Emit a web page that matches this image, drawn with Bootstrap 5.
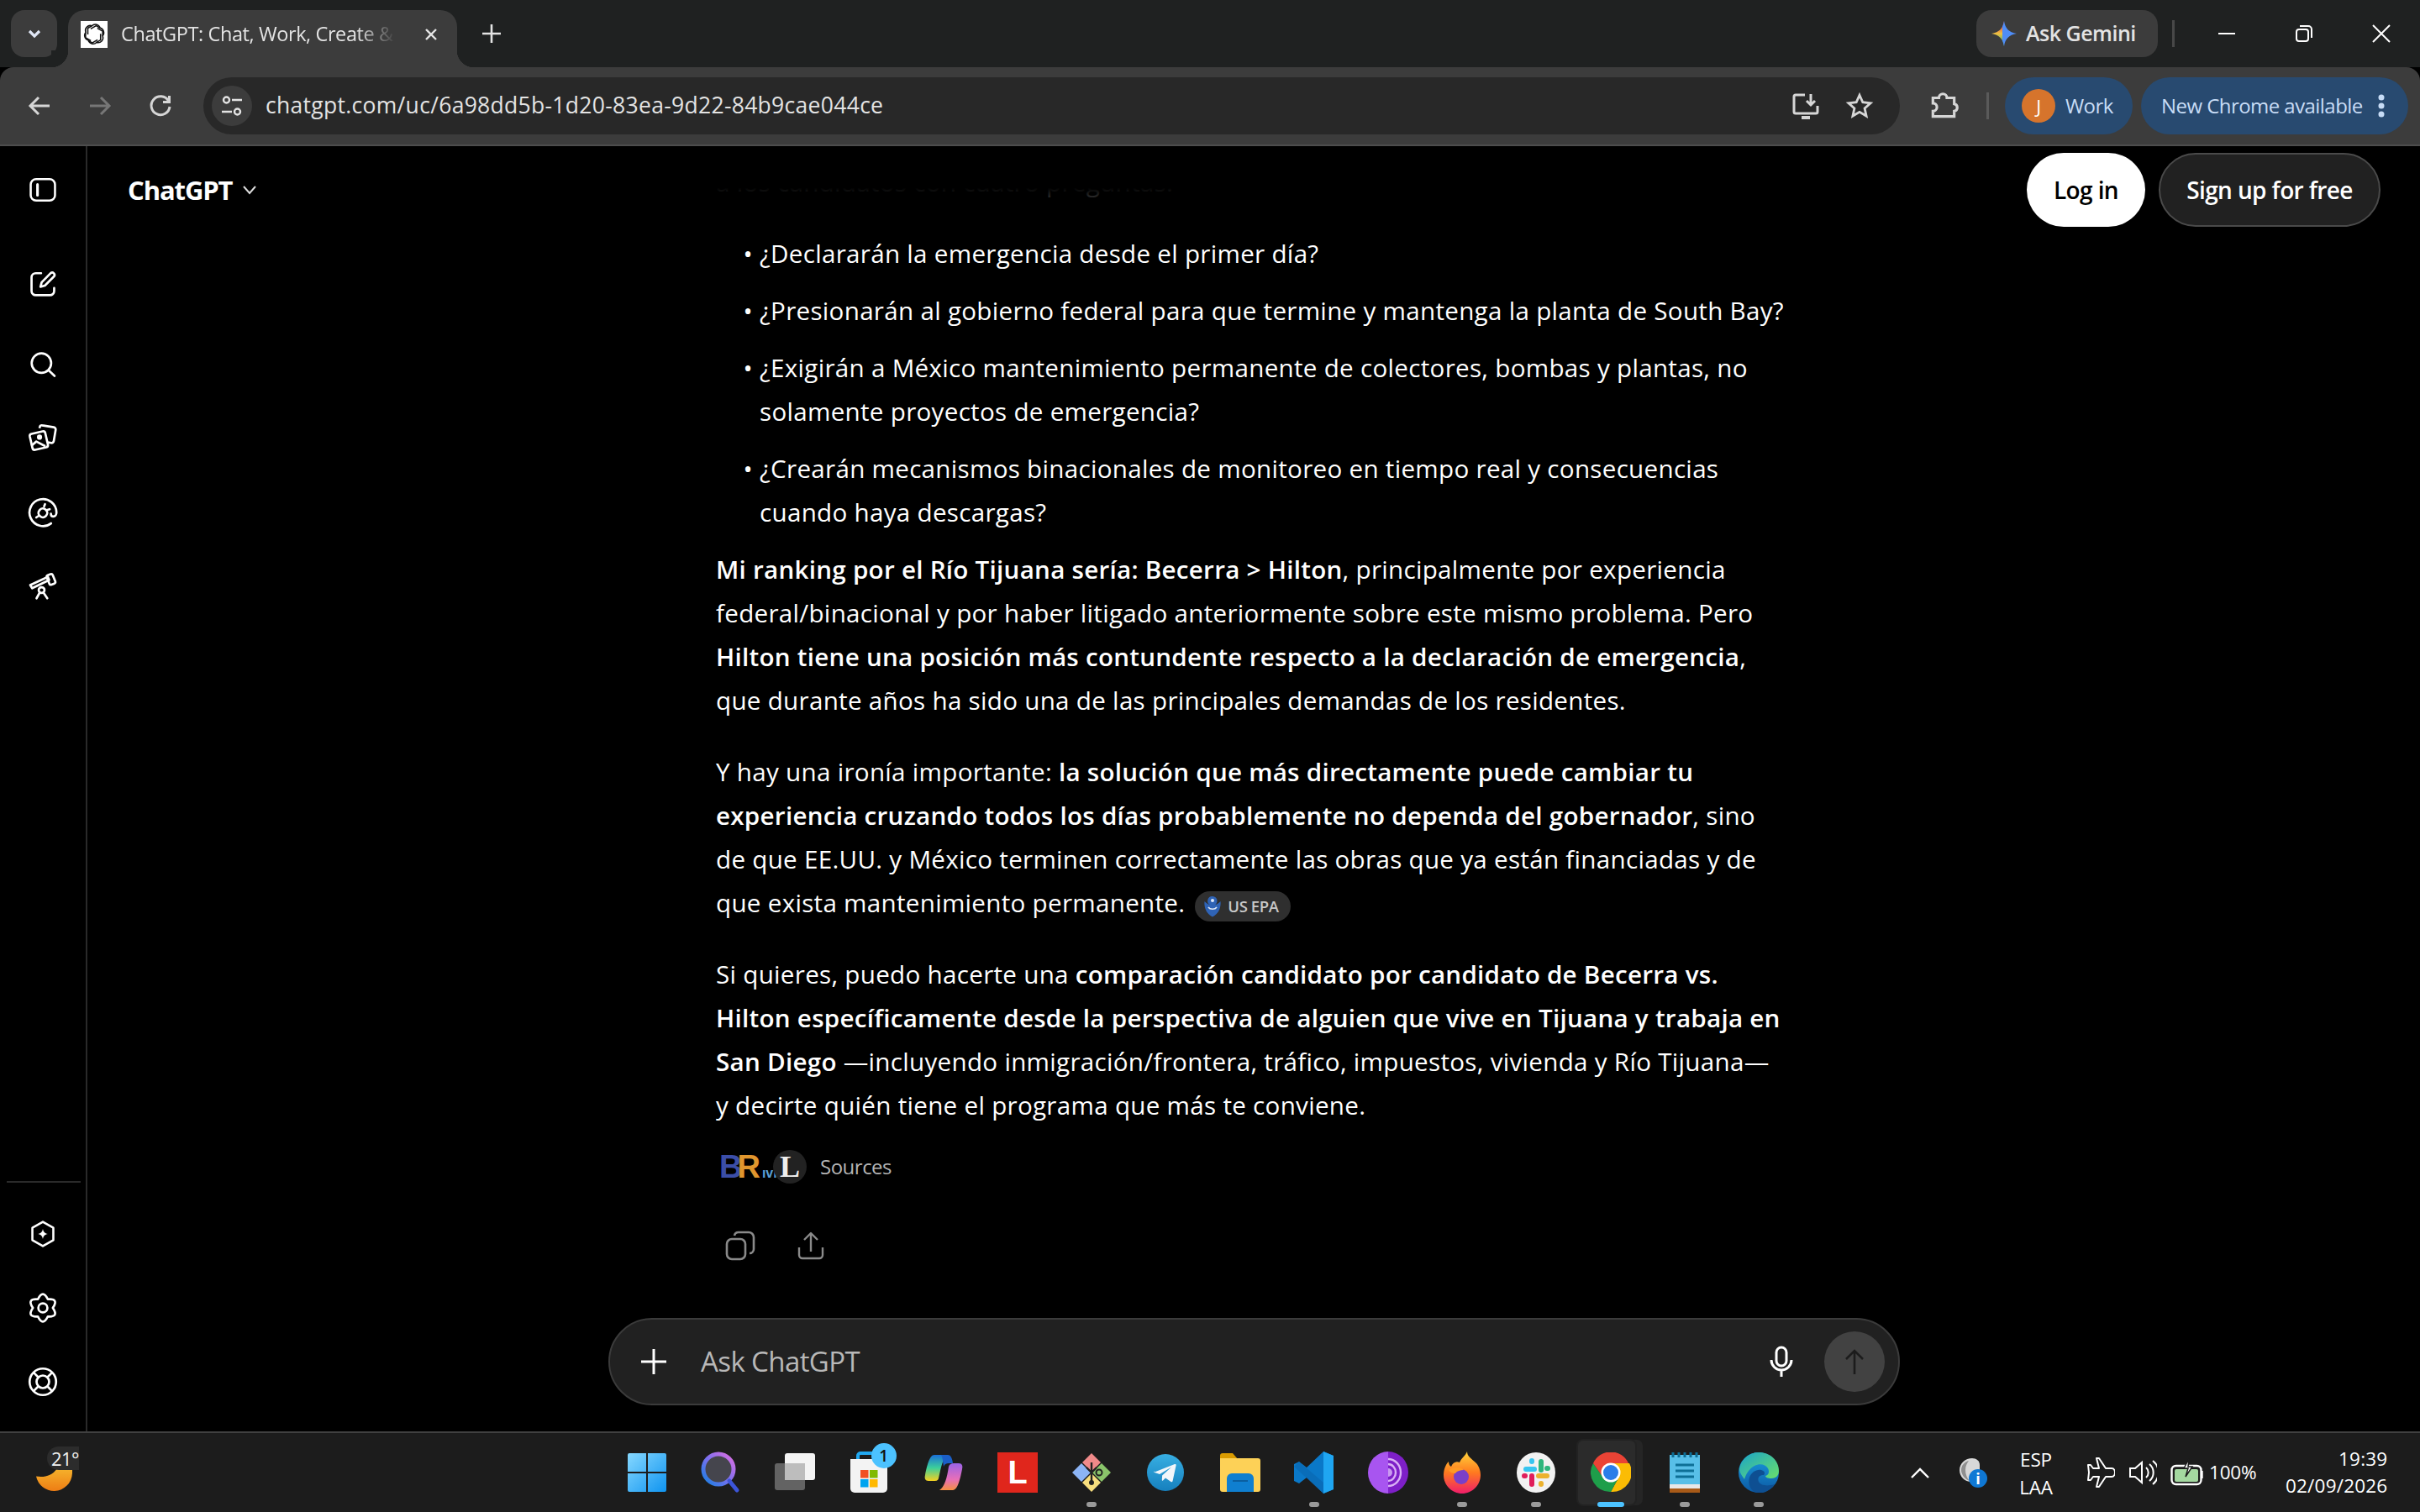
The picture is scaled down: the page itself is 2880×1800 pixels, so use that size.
<!DOCTYPE html>
<html lang="en">
<head>
<meta charset="UTF-8" />
<title>ChatGPT</title>
<link href="https://cdn.jsdelivr.net/npm/bootstrap@5.3.3/dist/css/bootstrap.min.css" rel="stylesheet" />
<style>
  html, body { height: 100%; }
  body { width: 2880px; height: 1800px; overflow: hidden; background: #000; color: #fff; font-family: "Open Sans", "Liberation Sans", sans-serif; }
  svg { display: block; flex: none; }

  /* browser chrome */
  .tabstrip { height: 80px; background: #1f2121; padding-left: 13px; }
  .tabs-btn { width: 55px; height: 56px; margin-top: 12px; border-radius: 16px; background: #3c3c3c; }
  .tab-active { position: relative; width: 463px; height: 68px; margin-top: 12px; margin-left: 13px; padding: 0 22px 11px 15px; background: #3c3c3c; border-radius: 20px 20px 0 0; color: #e3e3e3; font-size: 23.5px; letter-spacing: -.4px; }
  .tab-active::before, .tab-active::after { content: ""; position: absolute; bottom: 0; width: 20px; height: 20px; }
  .tab-active::before { left: -20px; background: radial-gradient(circle at 0 0, #1f2121 20px, #3c3c3c 20.5px); }
  .tab-active::after { right: -20px; background: radial-gradient(circle at 100% 0, #1f2121 20px, #3c3c3c 20.5px); }
  .tab-favicon { width: 32px; height: 32px; background: #fff; }
  .tab-title { width: 330px; margin-left: 16px; white-space: nowrap; overflow: hidden; -webkit-mask-image: linear-gradient(90deg, #000 85%, transparent 99%); mask-image: linear-gradient(90deg, #000 85%, transparent 99%); }
  .new-tab { margin-left: 13px; margin-top: 12px; }
  .gemini-pill { width: 216px; height: 56px; margin-top: 12px; padding-left: 18px; border-radius: 18px; background: #3c3c3c; color: #e3e3e3; font-size: 25px; font-weight: 600; letter-spacing: -.5px; gap: 11px; }
  .strip-sep { width: 3px; height: 32px; margin: 24px 0 0 17px; background: #484848; }
  .win-btn { width: 92px; height: 56px; margin-top: 12px; }
  .toolbar { height: 94px; background: #3c3c3c; border-radius: 16px 16px 0 0; border-bottom: 2px solid #4d4d4d; padding: 12px 13px 0 11px; }
  .nav-ic { width: 72px; height: 68px; }
  .urlbar { width: 2019px; height: 68px; margin-left: 15px; padding: 0 31px 0 10px; background: #282828; border-radius: 34px; color: #e3e3e3; font-size: 26.5px; letter-spacing: .3px; }
  .site-ic { width: 48px; height: 48px; margin-right: 16px; border-radius: 50%; background: #3c3c3c; }
  .star-ic { margin-left: 30px; }
  .ext-ic { margin-left: 16px; }
  .tool-sep { width: 3px; height: 32px; margin: 18px 0 0 15px; background: #5a5a5a; }
  .chip-blue { height: 68px; border-radius: 34px; background: #284a70; color: #c7dcf6; font-size: 24px; letter-spacing: -.55px; }
  .chip-work { width: 152px; margin-left: 19px; padding-left: 20px; gap: 12px; }
  .avatar-dot { width: 40px; height: 40px; border-radius: 50%; background: #d6742c; color: #fff; font-size: 22px; }
  .chip-update { width: 318px; margin-left: 10px; padding-left: 24px; gap: 17px; }

  /* page */
  .page-wrap { height: 1530px; }
  .side-rail { width: 104px; flex: none; border-right: 2px solid #2a2a2a; padding-bottom: 15px; padding-top: 8px; }
  .rail-ic { width: 100%; height: 88px; }
  .rail-hr { width: 88px; height: 2px; margin: 0 0 17px 8px; background: #2a2a2a; }
  .chat-main { position: relative; min-width: 0; }
  .chat-head { position: absolute; top: 0; left: 0; right: 0; height: 62px; background: linear-gradient(#000 80%, rgba(0, 0, 0, .82) 100%); z-index: 2; }
  .brand-btn { position: absolute; left: 48px; top: 29px; font-size: 31px; font-weight: 700; letter-spacing: -1.1px; gap: 12px; z-index: 3; }
  .head-actions { position: absolute; right: 47px; top: 8px; gap: 16px; z-index: 3; }
  .btn-login, .btn-signup { height: 88px; border-radius: 44px; font-size: 28px; font-weight: 600; letter-spacing: -.6px; }
  .btn-login { width: 141px; background: #fff; color: #000; }
  .btn-signup { width: 264px; background: #212121; border: 2px solid #4a4a4a; color: #fff; }
  .chat-scroll { padding: 17px 0 0 748px; overflow: hidden; }
  .msg-body { width: 1340px; font-size: 29.6px; line-height: 52px; letter-spacing: .29px; }
  .msg-body p { margin: 0 0 33px; }
  .msg-body ul { margin: 0 0 16px; padding-left: 52px; }
  .msg-body li { margin-bottom: 16px; }
  .msg-body li::marker { content: "• "; }
  .msg-body b { font-weight: 600; letter-spacing: .26px; }
  .cite-chip { height: 36px; width: 114px; margin-left: 12px; padding-left: 10px; gap: 7px; vertical-align: -6px; border-radius: 18px; background: #2f2f2f; color: #c8c8c8; font-size: 18.5px; font-weight: 600; line-height: 1; letter-spacing: -.4px; }
  .sources-row { height: 48px; margin-top: 23px; color: #b4b4b4; font-size: 24px; letter-spacing: -.5px; }
  .src-logo { width: 64px; margin-left: 4px; font-family: "Liberation Sans", sans-serif; font-weight: 700; font-size: 38px; letter-spacing: -6px; line-height: 1; white-space: nowrap; }
  .src-b { color: #3b4ea8; }
  .src-r { color: #e0962e; }
  .src-rest { font-size: 16px; letter-spacing: 0; color: #5aa0d8; margin-left: 8px; }
  .src-l { width: 40px; height: 40px; margin: 0 16px 0 0; border-radius: 50%; background: #222; font-family: "Liberation Serif", serif; font-size: 36px; font-weight: 700; color: #eee; letter-spacing: 0; line-height: 1; }
  .act-row { margin: 52px 0 0 11px; gap: 50px; }
  .composer-wrap { padding: 0 0 31px 620px; }
  .composer-bar { width: 1537px; height: 104px; background: #212121; border: 2px solid #3b3b3b; border-radius: 52px; padding-left: 36px; padding-right: 16px; }
  .composer-hint { margin-left: 40px; color: #b8b8b8; font-size: 33px; letter-spacing: -.6px; }
  .send-btn { width: 72px; height: 72px; margin-left: 37px; border-radius: 50%; background: #424242; }

  /* taskbar */
  .win-taskbar { height: 96px; background: #1c1c1c; border-top: 2px solid #404040; position: relative; }
  .weather-box { width: 726px; flex: none; padding: 16px 0 0 42px; }
  .weather-moon { position: relative; width: 52px; height: 54px; }
  .weather-glyph { position: absolute; left: 0; top: 26px; }
  .weather-temp { position: absolute; left: 14px; top: 0; width: 38px; height: 28px; background: #2c2c2c; border-radius: 14px 0 0 14px; color: #f2f2f2; font-size: 22px; line-height: 28px; text-align: right; letter-spacing: -.5px; }
  .task-slot { position: relative; width: 88.2px; flex: none; height: 94px; }
  .task-slot.is-on::before { content: ""; position: absolute; left: 4px; top: 7px; width: 72px; height: 80px; border-radius: 8px; background: #2b2b2b; border: 2px solid #222; box-shadow: 8px 0 0 -1px #252525; }
  .task-slot svg, .task-slot .l-tile { position: relative; }
  .run-dot { position: absolute; bottom: 6px; left: 50%; width: 12px; height: 6px; margin-left: -6px; border-radius: 3px; background: #9a9a9a; }
  .run-dot.is-active { width: 32px; margin-left: -16px; background: #4cc2ff; }
  .store-badge { position: absolute; left: 46px; top: 12px; width: 30px; height: 30px; border-radius: 50%; background: #4cc2ff; color: #111; font-size: 19px; font-weight: 600; line-height: 30px; text-align: center; }
  .l-tile { width: 48px; height: 48px; background: #e0261c; color: #fff; font-family: "Liberation Sans", sans-serif; font-size: 38px; font-weight: 700; line-height: 48px; text-align: center; }
  .tray-box { color: #fff; font-size: 22.5px; letter-spacing: -.2px; padding-left: 136px; }
  .cloud-ic { margin-left: 34px; }
  .lang-box { width: 60px; margin-left: 28px; padding-top: 2px; line-height: 33px; text-align: center; }
  .plane-ic { margin-left: 30px; }
  .pct-text { margin-left: 6px; }
  .clock-box { width: 125px; margin-left: 31px; line-height: 32px; letter-spacing: .2px; text-align: right; white-space: nowrap; }
</style>
</head>
<body class="d-flex flex-column">

  <!-- tab strip -->
  <div class="tabstrip d-flex align-items-start flex-none">
    <div class="tabs-btn d-flex align-items-center justify-content-center">
      <svg width="20" height="20" viewBox="0 0 20 20" fill="none" stroke="#dfe6f5" stroke-width="3.2"><path d="M4 7l6 6 6-6"/></svg>
    </div>
    <div class="tab-active d-flex align-items-center">
      <div class="tab-favicon d-flex align-items-center justify-content-center">
        <svg width="28" height="28" viewBox="0 0 24 24" fill="none" stroke="#111" stroke-width="1.3"><path d="M9.7 3.200a5 5 0 0 1 8.400 2.200 5 5 0 0 1 2.600 8.100 5 5 0 0 1-6.200 6.600 5 5 0 0 1-8.400-2.200 5 5 0 0 1-2.600-8.100 5 5 0 0 1 6.200-6.600z"/><path d="M9.700 3.200 5.600 5.600v6.300M18.100 5.400 14 3.100 8.500 6.300M20.700 13.500V8.700l-5.400-3.100M14.500 20.100l4.100-2.400v-6.300M5.900 18.300l4.100 2.300 5.500-3.200M3.300 10.500v4.800l5.400 3.100"/></svg>
      </div>
      <div class="tab-title">ChatGPT: Chat, Work, Create &amp; Code</div>
      <svg class="ms-auto" width="18" height="18" viewBox="0 0 18 18" stroke="#e3e3e3" stroke-width="2.4"><path d="M3 3l12 12M15 3L3 15"/></svg>
    </div>
    <svg class="new-tab" width="56" height="56" viewBox="0 0 56 56" stroke="#e3e3e3" stroke-width="2.6"><path d="M28 17v22M17 28h22"/></svg>
    <div class="gemini-pill d-flex align-items-center ms-auto">
      <svg width="30" height="30" viewBox="0 0 30 30">
        <defs>
          <clipPath id="gem-star"><path d="M15 0c1.300 8.500 5.500 13.500 15 15-9.500 1.500-13.700 6.500-15 15-1.300-8.500-5.500-13.500-15-15 9.500-1.500 13.700-6.500 15-15z"/></clipPath>
          <linearGradient id="gem" x1="0" y1="0" x2="0" y2="1"><stop offset=".2" stop-color="#e0524c"/><stop offset=".5" stop-color="#f0c040"/><stop offset=".8" stop-color="#5fb36a"/></linearGradient>
        </defs>
        <g clip-path="url(#gem-star)"><rect x="0" y="0" width="15" height="30" fill="url(#gem)"/><rect x="13" y="0" width="17" height="30" fill="#4f8df7"/></g>
      </svg>
      <span>Ask Gemini</span>
    </div>
    <div class="strip-sep"></div>
    <div class="win-btn d-flex align-items-center justify-content-center ms-3"><svg width="24" height="24" viewBox="0 0 24 24" stroke="#fff" stroke-width="2"><path d="M2 12h20"/></svg></div>
    <div class="win-btn d-flex align-items-center justify-content-center"><svg width="24" height="24" viewBox="0 0 24 24" fill="none" stroke="#fff" stroke-width="2"><rect x="3" y="7" width="14" height="14" rx="3"/><path d="M7 3h10a4 4 0 0 1 4 4v10"/></svg></div>
    <div class="win-btn d-flex align-items-center justify-content-center"><svg width="24" height="24" viewBox="0 0 24 24" stroke="#fff" stroke-width="2"><path d="M2 2l20 20M22 2L2 22"/></svg></div>
  </div>

  <!-- toolbar -->
  <div class="toolbar d-flex align-items-start">
    <div class="nav-ic d-flex align-items-center justify-content-center"><svg width="30" height="30" viewBox="0 0 30 30" fill="none" stroke="#d6d6d6" stroke-width="3"><path d="M27 15H5M14 5L4 15l10 10"/></svg></div>
    <div class="nav-ic d-flex align-items-center justify-content-center"><svg width="30" height="30" viewBox="0 0 30 30" fill="none" stroke="#777" stroke-width="3"><path d="M3 15h22M16 5l10 10-10 10"/></svg></div>
    <div class="nav-ic d-flex align-items-center justify-content-center"><svg width="30" height="30" viewBox="0 0 30 30" fill="none" stroke="#d6d6d6" stroke-width="3"><path d="M24.500 9A11 11 0 1 0 26 16"/><path d="M25.500 3v7.500H18" /></svg></div>
    <div class="urlbar d-flex align-items-center">
      <div class="site-ic d-flex align-items-center justify-content-center">
        <svg width="30" height="30" viewBox="0 0 30 30" fill="none" stroke="#e3e3e3" stroke-width="2.400"><circle cx="8.500" cy="8" r="3.500"/><path d="M15 8h12M3 22h12"/><circle cx="21.500" cy="22" r="3.500"/></svg>
      </div>
      <span>chatgpt.com/uc/6a98dd5b-1d20-83ea-9d22-84b9cae044ce</span>
      <svg class="ms-auto" width="34" height="32" viewBox="0 0 34 32" fill="none" stroke="#d6d6d6" stroke-width="3"><path d="M16 3H5a2 2 0 0 0-2 2v18a2 2 0 0 0 2 2h24a2 2 0 0 0 2-2v-7M23 2v13M18 10l5 5 5-5"/><path d="M12 30h10" stroke-width="4"/></svg>
      <svg class="star-ic" width="34" height="34" viewBox="0 0 24 24" fill="none" stroke="#d6d6d6" stroke-width="2"><path d="M12 3l2.700 6 6.500.7-4.900 4.400 1.400 6.400L12 17.200 6.300 20.500l1.400-6.400L2.800 9.700 9.300 9z"/></svg>
    </div>
    <div class="nav-ic ext-ic d-flex align-items-center justify-content-center"><svg width="38" height="38" viewBox="0 0 24 24" fill="none" stroke="#d6d6d6" stroke-width="2"><path d="M4 6h4.500a3 3 0 0 1 6 0H20v4.500a2.800 2.800 0 0 1 0 5.500V20H4v-4a3 3 0 0 0 0-6z"/></svg></div>
    <div class="tool-sep"></div>
    <div class="chip-blue chip-work d-flex align-items-center">
      <div class="avatar-dot d-flex align-items-center justify-content-center">J</div>
      <span>Work</span>
    </div>
    <div class="chip-blue chip-update d-flex align-items-center">
      <span>New Chrome available</span>
      <svg width="10" height="28" viewBox="0 0 10 28" fill="#c7dcf6"><circle cx="5" cy="4" r="3.500"/><circle cx="5" cy="14" r="3.500"/><circle cx="5" cy="24" r="3.500"/></svg>
    </div>
  </div>

  <!-- page -->
  <div class="page-wrap d-flex">
    <nav class="side-rail d-flex flex-column">
      <div class="rail-ic d-flex align-items-center justify-content-center">
        <svg width="34" height="34" viewBox="0 0 24 24" fill="none" stroke="#fff" stroke-width="1.800"><rect x="1.800" y="3" width="20.400" height="18" rx="4.500"/><path d="M7.500 7.500v9" stroke-width="2.200" stroke-linecap="round"/></svg>
      </div>
      <div class="rail-ic d-flex align-items-center justify-content-center mt-4">
        <svg width="34" height="34" viewBox="0 0 24 24" fill="none" stroke="#fff" stroke-width="1.900" stroke-linecap="round" stroke-linejoin="round"><path d="M10.500 3H6a3.500 3.500 0 0 0-3.500 3.500V18A3.500 3.500 0 0 0 6 21.500h12a3.500 3.500 0 0 0 3.500-3.500v-2.500"/><path d="M18.600 2.900a2 2 0 0 1 2.800 2.800l-7.700 7.700-3.700 1 1-3.700z"/></svg>
      </div>
      <div class="rail-ic d-flex align-items-center justify-content-center mt-2">
        <svg width="34" height="34" viewBox="0 0 24 24" fill="none" stroke="#fff" stroke-width="1.900" stroke-linecap="round"><circle cx="10.800" cy="10.800" r="8.200"/><path d="M16.800 16.800l5 4.700"/></svg>
      </div>
      <div class="rail-ic d-flex align-items-center justify-content-center">
        <svg width="38" height="38" viewBox="0 0 24 24" fill="none" stroke="#fff" stroke-width="1.700" stroke-linejoin="round"><path d="M9.500 4.300l.2-1a1.500 1.500 0 0 1 1.800-1.200l8.700 1.500a1.700 1.700 0 0 1 1.400 2l-1.400 8.300a1.700 1.700 0 0 1-2 1.400l-2.400-.4"/><path d="M3.500 8.500l8.300-1.900a1.700 1.700 0 0 1 2 1.300l2 8.700a1.700 1.700 0 0 1-1.300 2l-8.300 1.900a1.700 1.700 0 0 1-2-1.300l-2-8.700a1.700 1.700 0 0 1 1.300-2z"/><circle cx="9.500" cy="11" r="1.100" fill="#fff"/><path d="M3.300 17.500l3.800-3.200 6.800 3.500"/></svg>
      </div>
      <div class="rail-ic d-flex align-items-center justify-content-center">
        <svg width="36" height="36" viewBox="0 0 24 24" fill="none" stroke="#fff" stroke-width="1.800" stroke-linecap="round"><path d="M18.500 20.700A10.700 10.700 0 1 1 22.800 12c0 1.800-1 3.300-2.500 3.300-1.200 0-1.900-.9-1.900-2.200"/><rect x="8.600" y="9" width="6.800" height="6.800" rx="3.200" transform="rotate(40 12 12.400)"/><path d="M13 7.200l.7-1.700M15.600 10l1.800-.5M8.300 15l-1.500 1"/></svg>
      </div>
      <div class="rail-ic d-flex align-items-center justify-content-center">
        <svg width="36" height="36" viewBox="0 0 24 24" fill="none" stroke="#fff" stroke-width="1.800" stroke-linecap="round" stroke-linejoin="round"><path d="M2 11l14-6.500 1 2.500L3.500 13.500z"/><rect x="16" y="2.500" width="5" height="8" rx="1.300" transform="rotate(-22 18.500 6.500)"/><circle cx="11" cy="15" r="2.300"/><path d="M9.500 17L7 21.500M12.500 17l3 4.500"/></svg>
      </div>
      <div class="rail-hr mt-auto"></div>
      <div class="rail-ic d-flex align-items-center justify-content-center">
        <svg width="34" height="34" viewBox="0 0 24 24" fill="none" stroke="#fff" stroke-width="1.800" stroke-linejoin="round"><path d="M12 1.800l8.800 5v10.400l-8.800 5-8.800-5V6.800z"/><path fill="#fff" stroke="none" d="M12 7.800c.5 2.600 1.600 3.700 4.200 4.200-2.600.5-3.700 1.600-4.200 4.200-.5-2.600-1.600-3.700-4.200-4.200 2.600-.5 3.700-1.600 4.200-4.200z"/></svg>
      </div>
      <div class="rail-ic d-flex align-items-center justify-content-center">
        <svg width="36" height="36" viewBox="0 0 24 24" fill="none" stroke="#fff" stroke-width="1.800" stroke-linejoin="round"><path d="M8.050 5.160Q12 -3 15.950 5.160Q25 4.500 19.900 12Q25 19.500 15.950 18.840Q12 27 8.050 18.840Q-1 19.500 4.100 12Q-1 4.500 8.050 5.160z"/><circle cx="12" cy="12" r="3.600"/></svg>
      </div>
      <div class="rail-ic d-flex align-items-center justify-content-center">
        <svg width="36" height="36" viewBox="0 0 24 24" fill="none" stroke="#fff" stroke-width="1.800"><circle cx="12" cy="12" r="10.500"/><circle cx="12" cy="12" r="5"/><path d="M4.600 4.600l3.900 3.900M19.400 4.600l-3.900 3.900M4.600 19.400l3.900-3.900M19.400 19.400l-3.900-3.900"/></svg>
      </div>
    </nav>

    <main class="chat-main flex-grow-1 d-flex flex-column">
      <div class="chat-head"></div>
      <div class="brand-btn d-flex align-items-center">
        <span>ChatGPT</span>
        <svg width="18" height="12" viewBox="0 0 18 12" fill="none" stroke="#ddd" stroke-width="2"><path d="M2 2l7 8 7-8"/></svg>
      </div>
      <div class="head-actions d-flex">
        <button class="btn btn-login d-flex align-items-center justify-content-center p-0">Log in</button>
        <button class="btn btn-signup d-flex align-items-center justify-content-center p-0">Sign up for free</button>
      </div>

      <div class="chat-scroll flex-grow-1">
        <div class="msg-body">
          <p>a los candidatos con cuatro preguntas:</p>
          <ul>
            <li>¿Declararán la emergencia desde el primer día?</li>
            <li>¿Presionarán al gobierno federal para que termine y mantenga la planta de South Bay?</li>
            <li>¿Exigirán a México mantenimiento permanente de colectores, bombas y plantas, no<br>solamente proyectos de emergencia?</li>
            <li>¿Crearán mecanismos binacionales de monitoreo en tiempo real y consecuencias<br>cuando haya descargas?</li>
          </ul>
          <p><b>Mi ranking por el Río Tijuana sería: Becerra &gt; Hilton</b>, principalmente por experiencia<br>federal/binacional y por haber litigado anteriormente sobre este mismo problema. Pero<br><b>Hilton tiene una posición más contundente respecto a la declaración de emergencia</b>,<br>que durante años ha sido una de las principales demandas de los residentes.</p>
          <p>Y hay una ironía importante: <b>la solución que más directamente puede cambiar tu<br>experiencia cruzando todos los días probablemente no dependa del gobernador</b>, sino<br>de que EE.UU. y México terminen correctamente las obras que ya están financiadas y de<br>que exista mantenimiento permanente.<span class="cite-chip d-inline-flex align-items-center"><svg width="22" height="26" viewBox="0 0 22 26"><path fill="#2f63b5" d="M11 1a5.500 5.500 0 0 1 5.500 5.500c0 2-1 3.800-2.500 4.800 2-.6 4.500-2.300 6.500-4.300.8 7-2 15-9.500 18.500C3.500 22 .7 14 1.500 7c2 2 4.500 3.700 6.500 4.300a5.500 5.500 0 0 1 3-10.300z"/><circle cx="11" cy="6" r="2" fill="#dfe9f8"/><path d="M6 14c2 3 8 3 10 0" fill="none" stroke="#dfe9f8" stroke-width="1.600"/></svg><span>US EPA</span></span></p>
          <p class="mb-0">Si quieres, puedo hacerte una <b>comparación candidato por candidato de Becerra vs.<br>Hilton específicamente desde la perspectiva de alguien que vive en Tijuana y trabaja en<br>San Diego</b> —incluyendo inmigración/frontera, tráfico, impuestos, vivienda y Río Tijuana—<br>y decirte quién tiene el programa que más te conviene.</p>
        </div>
        <div class="sources-row d-flex align-items-center">
          <div class="src-logo"><span class="src-b">B</span><span class="src-r">R</span><span class="src-rest">ıvı</span></div>
          <div class="src-l d-flex align-items-center justify-content-center">L</div>
          <span>Sources</span>
        </div>
        <div class="act-row d-flex align-items-center">
          <svg width="36" height="36" viewBox="0 0 36 36" fill="none" stroke="#8a8a8a" stroke-width="2.600"><rect x="2" y="10" width="22" height="24" rx="6"/><path d="M11 6a5 5 0 0 1 5-4h12a6 6 0 0 1 6 6v14a5 5 0 0 1-5 5"/></svg>
          <svg width="32" height="34" viewBox="0 0 32 34" fill="none" stroke="#8a8a8a" stroke-width="2.400" stroke-linejoin="round"><path d="M16 24V3M8 10l8-8 8 8"/><path d="M2 19v9a4 4 0 0 0 4 4h20a4 4 0 0 0 4-4v-9"/></svg>
        </div>
      </div>

      <div class="composer-wrap">
        <div class="composer-bar d-flex align-items-center">
          <svg width="32" height="32" viewBox="0 0 32 32" stroke="#fff" stroke-width="3"><path d="M16 1v30M1 16h30"/></svg>
          <span class="composer-hint">Ask ChatGPT</span>
          <svg class="ms-auto" width="28" height="38" viewBox="0 0 28 38" fill="none" stroke="#fff" stroke-width="3"><rect x="8" y="2" width="12" height="22" rx="6"/><path d="M2 17a12 12 0 0 0 24 0M14 29v8"/></svg>
          <div class="send-btn d-flex align-items-center justify-content-center">
            <svg width="28" height="32" viewBox="0 0 28 32" fill="none" stroke="#1c1c1c" stroke-width="2.600"><path d="M14 31V3M4 13L14 3l10 10"/></svg>
          </div>
        </div>
      </div>
    </main>
  </div>

  <!-- windows taskbar -->
  <footer class="win-taskbar d-flex align-items-start">
    <div class="weather-box">
      <div class="weather-moon">
        <svg class="weather-glyph" width="46" height="28" viewBox="0 0 46 28">
          <defs><linearGradient id="moon" x1="0" y1="0" x2="0" y2="1"><stop offset="0" stop-color="#f5b32c"/><stop offset="1" stop-color="#ee7d14"/></linearGradient></defs>
          <path fill="url(#moon)" d="M44 0v6A22 22 0 0 1 23 27 22 22 0 0 1 1 9.500c9 1.500 19 0 25-9.500z"/>
        </svg>
        <div class="weather-temp">21°</div>
      </div>
    </div>

    <div class="task-slot d-flex align-items-center justify-content-center">
      <svg width="46" height="46" viewBox="0 0 46 46">
        <defs><linearGradient id="winb" x1="0" y1="0" x2="1" y2="1"><stop offset="0" stop-color="#86d8ff"/><stop offset="1" stop-color="#0f94f0"/></linearGradient></defs>
        <path fill="url(#winb)" d="M2 0h20v22H0V2a2 2 0 0 1 2-2zM24 0h20a2 2 0 0 1 2 2v20H24zM0 24h22v22H2a2 2 0 0 1-2-2zM24 24h22v20a2 2 0 0 1-2 2H24z"/>
      </svg>
    </div>
    <div class="task-slot d-flex align-items-center justify-content-center">
      <svg width="48" height="50" viewBox="0 0 48 50" fill="none">
        <defs><linearGradient id="srch" x1="1" y1="0" x2="0" y2="1"><stop offset="0" stop-color="#e06fe0"/><stop offset=".5" stop-color="#7c6ff0"/><stop offset="1" stop-color="#1580e0"/></linearGradient></defs>
        <circle cx="21" cy="21" r="18" fill="#45454d" stroke="url(#srch)" stroke-width="5"/>
        <path d="M34 35l9 11" stroke="#3c55d8" stroke-width="5" stroke-linecap="round"/>
      </svg>
    </div>
    <div class="task-slot d-flex align-items-center justify-content-center">
      <svg width="48" height="46" viewBox="0 0 48 46">
        <rect x="12" y="0" width="36" height="32" rx="3" fill="#f4f4f4"/>
        <rect x="0" y="12" width="36" height="32" rx="3" fill="#6c6c6c" fill-opacity=".9"/>
        <rect x="12" y="12" width="24" height="20" fill="#bdbdbd"/>
      </svg>
    </div>
    <div class="task-slot d-flex align-items-center justify-content-center">
      <svg width="48" height="50" viewBox="0 0 48 50">
        <path d="M10 13V5a3 3 0 0 1 3-3h20" fill="none" stroke="#21a8f0" stroke-width="4"/>
        <path fill="#f3f3f3" d="M1 9h44v35a5 5 0 0 1-5 5H6a5 5 0 0 1-5-5z"/>
        <rect x="13" y="22" width="9.500" height="9.500" fill="#f25022"/><rect x="24" y="22" width="9.500" height="9.500" fill="#7fba00"/>
        <rect x="13" y="33" width="9.500" height="9.500" fill="#00a4ef"/><rect x="24" y="33" width="9.500" height="9.500" fill="#ffb900"/>
      </svg>
      <span class="store-badge">1</span>
    </div>
    <div class="task-slot d-flex align-items-center justify-content-center">
      <svg width="46" height="46" viewBox="0 0 46 46">
        <defs>
          <linearGradient id="cop1" x1="0" y1="0" x2="0" y2="1"><stop offset="0" stop-color="#1b6fd8"/><stop offset=".5" stop-color="#3ccf9a"/><stop offset="1" stop-color="#f5d020"/></linearGradient>
          <linearGradient id="cop2" x1="0" y1="0" x2="0" y2="1"><stop offset="0" stop-color="#9a63e8"/><stop offset=".6" stop-color="#e86fb8"/><stop offset="1" stop-color="#f59042"/></linearGradient>
        </defs>
        <path fill="url(#cop1)" d="M12 2h16c-6 4-8 14-11 28-1 3-3 3-6 3H5c-4 0-5-3-4-7C3 16 6 2 12 2z"/>
        <path fill="url(#cop2)" d="M34 44H18c6-4 9-14 11-28 1-3 3-4 6-4h6c4 0 5 3 4 7-2 10-5 25-11 25z"/>
        <path fill="#1b5fc8" d="M20 2h8c3 0 5 3 6 10h-5c-3 0-5 1-6 4-1-6-1-11-3-14z"/>
      </svg>
    </div>
    <div class="task-slot d-flex align-items-center justify-content-center"><div class="l-tile">L</div></div>
    <div class="task-slot d-flex align-items-center justify-content-center">
      <svg width="50" height="50" viewBox="0 0 50 50">
        <path fill="#f08a8a" d="M25 2l11 11-11 11-11-11z"/><path fill="#8cb4f5" d="M13 14l11 11-11 11L2 25z"/>
        <path fill="#8ac46a" d="M37 14l11 11-11 11-11-11z"/><path fill="#f7de7e" d="M25 26l11 11-11 11-11-11z"/>
        <path d="M25 13v24M19 19l6 6 6-6" fill="none" stroke="#222" stroke-width="2.400"/>
        <circle cx="25" cy="37" r="3" fill="#222"/><circle cx="34" cy="25" r="3.500" fill="none" stroke="#222" stroke-width="2"/>
      </svg>
      <span class="run-dot"></span>
    </div>
    <div class="task-slot d-flex align-items-center justify-content-center">
      <svg width="44" height="44" viewBox="0 0 44 44">
        <defs><linearGradient id="tg" x1="0" y1="0" x2="0" y2="1"><stop offset="0" stop-color="#37aee2"/><stop offset="1" stop-color="#1680be"/></linearGradient></defs>
        <circle cx="22" cy="22" r="22" fill="url(#tg)"/>
        <path fill="#f2f6fa" d="M9 21.500l24-9.500c1-.4 1.900.3 1.600 1.500l-4 18.500c-.3 1.200-1.100 1.500-2.100.9L22 28.500l-3 3c-.5.500-1.200.3-1.200-.5l.3-5.500 11-10-14 8.500-6-2c-1-.3-1-1.100-.1-1.500z"/>
      </svg>
    </div>
    <div class="task-slot d-flex align-items-center justify-content-center">
      <svg width="48" height="46" viewBox="0 0 48 46">
        <path fill="#d99b00" d="M0 3a3 3 0 0 1 3-3h12l6 7h-21z"/>
        <path fill="#fdd157" d="M0 6h45a3 3 0 0 1 3 3v34a3 3 0 0 1-3 3H3a3 3 0 0 1-3-3z"/>
        <path fill="#0f7fd0" d="M8 46V30a6 6 0 0 1 6-6h20a6 6 0 0 1 6 6v16z"/>
        <path d="M15 33h18" stroke="#0a5fa0" stroke-width="2"/>
      </svg>
    </div>
    <div class="task-slot d-flex align-items-center justify-content-center">
      <svg width="50" height="50" viewBox="0 0 50 50">
        <path fill="#0a78c8" d="M36 0l12 5v40l-12 5-20-19-9 7-6-3V15l6-3 9 7z"/>
        <path fill="#1fa6f2" d="M36 0l12 5v40l-12 5z"/>
        <path fill="#0a64ad" d="M7 12l29 25v13L1 18z" fill-opacity=".55"/>
      </svg>
      <span class="run-dot"></span>
    </div>
    <div class="task-slot d-flex align-items-center justify-content-center">
      <svg width="48" height="50" viewBox="0 0 48 50" fill="none">
        <path fill="#a855f0" d="M24 0a24 25 0 0 0 0 50z"/>
        <path fill="#7e1fc8" d="M24 0a24 25 0 0 1 0 50z"/>
        <path d="M24 9a15 16 0 0 1 0 32M24 15a9 10 0 0 1 0 20" stroke="#d9b0f5" stroke-width="2.400"/>
        <path fill="#c99af0" d="M24 20a5 5 0 0 1 0 10z"/>
      </svg>
    </div>
    <div class="task-slot d-flex align-items-center justify-content-center">
      <svg width="44" height="50" viewBox="0 0 44 50">
        <defs><linearGradient id="ffx" x1=".5" y1="0" x2=".5" y2="1"><stop offset="0" stop-color="#ffd43a"/><stop offset=".5" stop-color="#ff7a1f"/><stop offset="1" stop-color="#f01d6a"/></linearGradient></defs>
        <path fill="url(#ffx)" d="M28 0c0 6 5 8 11 14 4 5 5 10 5 14 0 12-10 22-22 22S0 40 0 28c0-6 2-12 6-16 0 3 1 5 3 6 2-5 6-7 10-5 2-5 7-8 9-13z"/>
        <circle cx="21" cy="30" r="9" fill="#7a3fc8"/>
        <path fill="#ff9a24" d="M6 22c6-4 14-4 18 0-4 0-8 1-10 4-3 0-6-1-8-4z"/>
      </svg>
      <span class="run-dot"></span>
    </div>
    <div class="task-slot d-flex align-items-center justify-content-center">
      <svg width="46" height="48" viewBox="0 0 46 48">
        <ellipse cx="23" cy="24" rx="23" ry="24" fill="#f2f2f2"/>
        <g stroke-width="6" stroke-linecap="round">
          <path d="M11 20h10M18 10v1" stroke="#36c5f0"/><path d="M29 11v10M36 19h1" stroke="#2eb67d"/>
          <path d="M26 28h10M29 38v-1" stroke="#ecb22e"/><path d="M18 28v10M9 28h1" stroke="#e01e5a"/>
        </g>
      </svg>
      <span class="run-dot"></span>
    </div>
    <div class="task-slot is-on d-flex align-items-center justify-content-center">
      <svg width="48" height="48" viewBox="0 0 48 48">
        <path fill="#fbbc04" d="M46 13A23 23 0 0 1 24 47L33.500 29.500 24 13z"/>
        <path fill="#1e9e4a" d="M24 47A23 23 0 0 1 3 13l11.500 16.500h19z"/>
        <path fill="#ea4335" d="M24 13H45A23 23 0 0 0 3 13l11.500 16.500L24 24z"/>
        <circle cx="24" cy="24" r="11.500" fill="#fff"/><circle cx="24" cy="24" r="9" fill="#2b7de9"/>
      </svg>
      <span class="run-dot is-active"></span>
    </div>
    <div class="task-slot d-flex align-items-center justify-content-center">
      <svg width="36" height="48" viewBox="0 0 36 48">
        <rect x="0" y="3" width="36" height="38" fill="#58bfe8"/>
        <rect x="0" y="38" width="36" height="5" fill="#e8e8e8"/><rect x="0" y="43" width="36" height="5" fill="#a85a18"/>
        <path d="M7 15h22M7 22h22M7 29h22" stroke="#0d6f96" stroke-width="3"/>
        <path d="M4 0v6M11 0v6M18 0v6M25 0v6M32 0v6" stroke="#0d6f96" stroke-width="3"/>
      </svg>
      <span class="run-dot"></span>
    </div>
    <div class="task-slot d-flex align-items-center justify-content-center">
      <svg width="48" height="48" viewBox="0 0 48 48">
        <defs>
          <linearGradient id="edg1" x1="0" y1="0" x2="1" y2="1"><stop offset="0" stop-color="#1aa4c8"/><stop offset="1" stop-color="#6be06a"/></linearGradient>
          <linearGradient id="edg2" x1="0" y1="0" x2="0" y2="1"><stop offset="0" stop-color="#1aa0e0"/><stop offset="1" stop-color="#0c59a4"/></linearGradient>
        </defs>
        <circle cx="24" cy="24" r="24" fill="url(#edg2)"/>
        <path fill="url(#edg1)" d="M24 0c14 0 24 10 24 22 0 5-3 9-9 9-4 0-7-1-7-3 4-1 5-5 3-9-3-5-10-6-16-3-7 4-10 10-12 16C2 25 1 22 1 20 3 8 13 0 24 0z"/>
        <path fill="#0e4f92" d="M21 48c-7-3-10-10-8-18 2-6 8-10 14-9 4 1 5 4 3 6-5 0-8 3-6 8 2 4 9 6 19 3-5 7-13 12-22 10z"/>
      </svg>
      <span class="run-dot"></span>
    </div>

    <div class="tray-box d-flex align-items-center align-self-stretch">
      <svg width="24" height="14" viewBox="0 0 24 14" fill="none" stroke="#fff" stroke-width="2.400"><path d="M2 13L12 3l10 10"/></svg>
      <svg class="cloud-ic" width="34" height="38" viewBox="0 0 34 38">
        <path fill="#d8d8d8" d="M16 2C8 2 1 8 1 16s6 14 14 14h10V10c0-5-4-8-9-8z"/>
        <path fill="#8f8f8f" d="M12 5C6 7 3 11 3 16s4 11 10 13c-3-3-5-8-5-13s2-8 4-11z"/>
        <circle cx="23" cy="26" r="11" fill="#0f78d4"/>
        <text x="23" y="33" fill="#fff" font-size="18" font-weight="700" text-anchor="middle">i</text>
      </svg>
      <div class="lang-box"><div>ESP</div><div>LAA</div></div>
      <svg class="plane-ic" width="34" height="36" viewBox="0 0 34 36" fill="none" stroke="#fff" stroke-width="2" stroke-linejoin="round"><path d="M12 1h3l8 12h7c3 0 4 3 4 5s-1 5-4 5h-7l-8 12h-3l3-12H8l-3 4H2l1-9-1-9h3l3 4h7z"/></svg>
      <svg class="ms-3" width="34" height="32" viewBox="0 0 34 32" fill="none" stroke="#fff" stroke-width="2"><path d="M2 11v10h6l8 7V4l-8 7z"/><path d="M21 10a8 8 0 0 1 0 12M25 6a13 13 0 0 1 0 20M29 2a18 18 0 0 1 0 28"/></svg>
      <svg class="ms-3" width="40" height="34" viewBox="0 0 40 34" fill="none"><rect x="1.500" y="9" width="35" height="22" rx="5" stroke="#fff" stroke-width="2.400"/><rect x="5" y="13" width="28" height="15" rx="2" fill="#a4d8a0"/><path d="M37.500 15v9" stroke="#fff" stroke-width="2.400"/><path d="M22 1l-6 11h5l-3 10 8-12h-5z" fill="#fff" stroke="#1c1c1c" stroke-width="1.500"/></svg>
      <span class="pct-text">100%</span>
      <div class="clock-box"><div>19:39</div><div>02/09/2026</div></div>
    </div>
  </footer>

  <script src="https://cdn.jsdelivr.net/npm/bootstrap@5.3.3/dist/js/bootstrap.bundle.min.js"></script>
</body>
</html>
